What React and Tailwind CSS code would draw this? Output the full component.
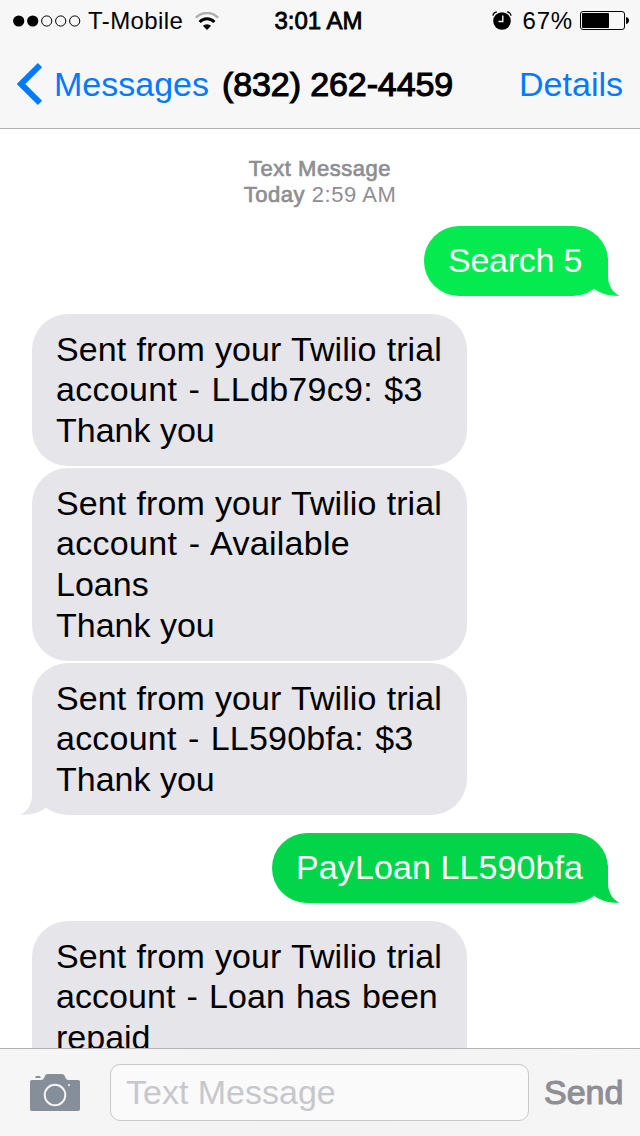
import React from 'react';

const SENT = { text: 'Sent from your Twilio trial', className: 'tracking-[0.09px] [word-spacing:0.6px]' };
const THANKS = { text: 'Thank you', className: '' };

const messages = [
  {
    from: 'me',
    lines: [{ text: 'Search 5', className: 'tracking-[-0.25px]' }],
    tail: true,
    className: 'mb-[18px] w-[184px] bg-[#04ea4f]',
    fill: '#04ea4f',
  },
  {
    from: 'them',
    lines: [SENT, { text: 'account - LLdb79c9: $3', className: 'tracking-[0.3px] [word-spacing:1.6px]' }, THANKS],
    className: 'mb-[2px] pt-[14.67px] pb-[15.33px]',
  },
  {
    from: 'them',
    lines: [
      SENT,
      { text: 'account - Available', className: 'tracking-[0.3px] [word-spacing:1.8px]' },
      { text: 'Loans', className: '' },
      THANKS,
    ],
    className: 'mb-[2px] pt-[14.67px] pb-[15.33px]',
  },
  {
    from: 'them',
    lines: [SENT, { text: 'account - LL590bfa: $3', className: 'tracking-[0.22px] [word-spacing:1.6px]' }, THANKS],
    tail: true,
    className: 'mb-[18px] py-[15px]',
  },
  {
    from: 'me',
    lines: [{ text: 'PayLoan LL590bfa', className: 'tracking-[0.1px]' }],
    tail: true,
    className: 'mb-[18px] w-[336px] bg-[#02d54a]',
    fill: '#02d54a',
  },
  {
    from: 'them',
    lines: [
      SENT,
      { text: 'account - Loan has been', className: 'tracking-[0.05px] [word-spacing:1.6px]' },
      { text: 'repaid', className: '' },
    ],
    className: 'h-[193px] py-[15px]',
  },
];

function Tail({ fill, flip }) {
  return (
    <svg
      viewBox="0 0 40 38"
      className={flip ? 'absolute bottom-0 -left-3 h-[38px] w-10 -scale-x-100' : 'absolute -right-3 bottom-0 h-[38px] w-10'}
    >
      <path d="M28 0V18C28 27 32.5 34.5 39.5 37.8C30 38 21 36 14.5 31L8 10Z" fill={fill} />
    </svg>
  );
}

function Bubble({ message }) {
  const mine = message.from === 'me';

  return (
    <div
      className={`relative shrink-0 text-[34px] leading-[40.67px] ${message.className} ${
        mine
          ? 'h-[70px] self-end rounded-[35px] px-6 pt-[14px] text-white'
          : 'w-[435px] self-start rounded-[36px] bg-[#e5e5ea] px-6 text-black'
      }`}
    >
      {message.tail && <Tail fill={mine ? message.fill : '#e5e5ea'} flip={!mine} />}
      {message.lines.map((line) => (
        <p key={line.text} className={`relative whitespace-nowrap ${line.className}`}>{line.text}</p>
      ))}
    </div>
  );
}

function SignalDots() {
  return (
    <svg viewBox="0 0 68 12" className="h-3 w-[68px]">
      {[0, 1, 2, 3, 4].map((i) => (
        <circle
          key={i}
          cx={5.7 + i * 14}
          cy="6"
          r={i < 2 ? 5.6 : 5.1}
          fill={i < 2 ? '#000' : 'none'}
          stroke={i < 2 ? 'none' : '#000'}
        />
      ))}
    </svg>
  );
}

function WifiIcon() {
  return (
    <svg viewBox="0 0 24 18" className="h-[18px] w-6" fill="none">
      <path d="M0.9 5.6A15.6 15.6 0 0 1 23.1 5.6" stroke="#b0b0b0" strokeWidth="2.6" />
      <path d="M4.6 9.9A10.4 10.4 0 0 1 19.4 9.9" stroke="#000" strokeWidth="2.9" />
      <path d="M12 18L7.9 13.8A5.9 5.9 0 0 1 16.1 13.8Z" fill="#000" />
    </svg>
  );
}

function AlarmIcon() {
  return (
    <svg viewBox="0 0 20 19" className="h-[19px] w-5" fill="none">
      <circle cx="10" cy="10" r="8.8" fill="#000" />
      <path d="M1 4.8C1.2 2.8 2.6 1.2 4.8 1M19 4.8C18.8 2.8 17.4 1.2 15.2 1" stroke="#000" strokeWidth="1.3" />
      <path d="M10.8 4.5V10.5H6.5" stroke="#f7f7f7" strokeWidth="1.4" />
    </svg>
  );
}

function BatteryIcon() {
  return (
    <svg viewBox="0 0 50 19" className="h-[19px] w-[50px]">
      <rect x="0.5" y="0.5" width="44" height="18" rx="2.5" fill="none" stroke="#000" />
      <rect x="2" y="2" width="27" height="15" rx="0.8" fill="#000" />
      <path d="M46 6C48 6.3 49 7.6 49 9.5S48 12.7 46 13Z" fill="#000" />
    </svg>
  );
}

function CameraIcon() {
  return (
    <svg viewBox="0 0 50 37" className="h-[37px] w-[50px]">
      <path
        d="M2 6H11C13 6 13.6 4.8 14.4 3.2C15.2 1.2 16 0 18 0H31.5C33.6 0 34.4 1.2 35.2 3.2C36 4.8 36.6 6 38.5 6H48C49.3 6 50 6.8 50 8V35C50 36.3 49.3 37 48 37H2C.7 37 0 36.3 0 35V8C0 6.8.7 6 2 6Z"
        fill="#868e99"
      />
      <path d="M5.5 4V3C5.5 2.4 5.9 2 6.5 2H9.5C10.1 2 10.5 2.4 10.5 3V4Z" fill="#868e99" />
      <circle cx="25" cy="21" r="10.3" fill="none" stroke="#f3f3f4" strokeWidth="2" />
      <circle cx="39" cy="11" r="1.1" fill="#f3f3f4" />
    </svg>
  );
}

function StatusBar() {
  return (
    <div className="flex h-10 items-center pt-px text-[24px] leading-10">
      <div className="flex w-[261px] items-center pl-[13px]">
        <SignalDots />
        <span className="ml-[7px] w-[107px] whitespace-nowrap tracking-[0.4px]">T-Mobile</span>
        <WifiIcon />
      </div>
      <span className="w-[115px] text-center whitespace-nowrap [-webkit-text-stroke:0.8px_#000]">3:01 AM</span>
      <div className="flex flex-1 items-center justify-end pr-[10px]">
        <AlarmIcon />
        <span className="mr-[7px] ml-[11px] tracking-[0.8px]">67%</span>
        <BatteryIcon />
      </div>
    </div>
  );
}

function NavBar() {
  return (
    <div className="flex h-[88px] items-center pr-[17px] pl-[17px] text-[34px] leading-[88px] whitespace-nowrap">
      <svg viewBox="0 0 26 42" className="h-[42px] w-[26px]" fill="none">
        <path d="M23 2.2L4 21L23 39.8" stroke="#007aff" strokeWidth="6" />
      </svg>
      <span className="ml-[11px] w-[168px] text-[#007aff]">Messages</span>
      <h1 className="tracking-[-0.1px] [-webkit-text-stroke:1.1px_#000]">(832) 262-4459</h1>
      <span className="ml-auto text-[#007aff]">Details</span>
    </div>
  );
}

function Composer() {
  return (
    <div className="flex h-[88px] shrink-0 items-center border-t border-[#b2b2b2] bg-linear-to-r from-[#f6f6f6] via-[#f2f2f3] to-[#f6f6f6] pl-[30px] text-[34px]">
      <CameraIcon />
      <div className="ml-[30px] h-[57px] w-[419px] rounded-[10px] border border-[#c7c7cc] bg-[#fafafa] pl-[15px] leading-[54px] text-[#c7c7cc]">
        Text Message
      </div>
      <span className="ml-[15px] text-[#8e8e93] [-webkit-text-stroke:1.1px_#8e8e93]">Send</span>
    </div>
  );
}

export default function App() {
  return (
    <div className="flex h-[1136px] w-[640px] flex-col overflow-hidden bg-white font-['Liberation_Sans',Arial,sans-serif] text-black">
      <header className="h-[129px] shrink-0 border-b border-[#b2b2b2] bg-[#f7f7f7]">
        <StatusBar />
        <NavBar />
      </header>
      <main className="flex min-h-0 flex-1 flex-col overflow-hidden px-8 pt-[27px]">
        <div className="mb-[18px] h-[52px] shrink-0 text-center text-[22px] leading-[26px] tracking-[0.55px] text-[#8e8e93]">
          <p className="[-webkit-text-stroke:0.7px_#8e8e93]">Text Message</p>
          <p>
            <span className="[-webkit-text-stroke:0.7px_#8e8e93]">Today</span> 2:59 AM
          </p>
        </div>
        {messages.map((message, i) => (
          <Bubble key={i} message={message} />
        ))}
      </main>
      <Composer />
    </div>
  );
}
